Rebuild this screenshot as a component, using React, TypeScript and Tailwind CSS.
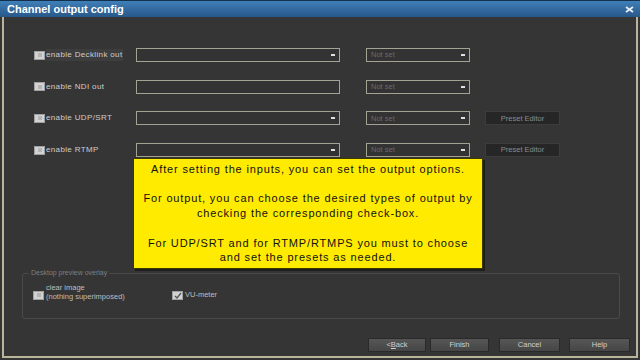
import React from "react";

const Check: React.FC<{ checked?: boolean }> = ({ checked }) => (
  <div className="w-[11px] h-[9px] bg-[#d2d2d2] border border-[#a0a0a0] flex items-center justify-center shrink-0">
    {checked ? (
      <svg width="8" height="7" viewBox="0 0 8 7">
        <path d="M1 4 L3 6 L7 1" stroke="#555" strokeWidth="1.3" fill="none" />
      </svg>
    ) : (
      <div className="w-[4px] h-[4px] bg-[#b4b4b4]" />
    )}
  </div>
);

const Select: React.FC<{ w: string; text?: string; arrow?: boolean }> = ({ w, text, arrow = true }) => (
  <div className={`${w} h-[14px] border border-[#a3a394] bg-[#333333] flex items-center justify-between px-[4px]`}>
    <span className="text-[7.5px] text-[#6a6a6a]">{text}</span>
    {arrow && <div className="w-[4px] h-[2px] bg-[#e0e0e0]" />}
  </div>
);

const PresetBtn: React.FC = () => (
  <div className="ml-[15px] w-[75px] h-[14px] bg-[#262626] border border-[#3c3c3c] flex items-center justify-center text-[7.5px] text-[#8c8c8c]">
    Preset Editor
  </div>
);

const Row: React.FC<{ label: string; focus?: boolean; noArrow?: boolean; preset?: boolean }> = ({ label, focus, noArrow, preset }) => (
  <div className="flex items-center h-[14px]">
    <div className="w-[102px] flex items-center">
      <Check />
      <span className={`ml-[1px] text-[8px] tracking-[0.35px] text-[#cdcdcd] ${focus ? "bg-[#3d3d3d] pr-[1px]" : ""}`}>{label}</span>
    </div>
    <Select w="w-[204px]" arrow={!noArrow} />
    <div className="w-[26px]" />
    <Select w="w-[104px]" text="Not set" />
    {preset && <PresetBtn />}
  </div>
);

const Btn: React.FC<{ w: string; children: React.ReactNode }> = ({ w, children }) => (
  <div className={`${w} h-[14px] bg-gradient-to-b from-[#565656] to-[#464646] border border-[#2a2a2a] flex items-center justify-center text-[7.5px] text-[#cfcfcf]`}>
    {children}
  </div>
);

export default function App() {
  return (
    <div className="w-[640px] h-[360px] bg-[#353535] relative overflow-hidden" style={{ fontFamily: '"Liberation Sans", Arial, sans-serif' }}>
      {/* title bar */}
      <div className="h-[17px] bg-gradient-to-b from-[#3f7fb8] to-[#28588a] border-t border-[#14304d] flex items-center justify-between pl-[7px] pr-[6px]">
        <span className="text-[11px] font-bold text-white">Channel output config</span>
        <svg width="9" height="7" viewBox="0 0 9 7">
          <path d="M1 1 L8 6 M8 1 L1 6" stroke="#e8eef5" strokeWidth="1.8" />
        </svg>
      </div>

      {/* frame */}
      <div className="h-[341px] mx-[2px] border-l-2 border-r-2 border-b-2 border-[#b9b59a] flex flex-col">
        <div className="pl-[30px] pt-[31px] flex flex-col gap-[17.7px]">
          <Row label="enable Decklink out" focus />
          <Row label="enable NDI out" noArrow />
          <Row label="enable UDP/SRT" preset />
          <Row label="enable RTMP" preset />
        </div>

        {/* group */}
        <div className="ml-[18px] mr-[16px] mt-[116px] h-[46px] border border-[#4a4a4a] rounded-[3px] relative">
          <span className="absolute -top-[6px] left-[6px] px-[2px] bg-[#353535] text-[7px] text-[#7f7f7f]">Desktop preview overlay</span>
          <div className="flex items-center pt-[15px] pl-[10px]">
            <Check />
            <div className="ml-[2px] text-[7.5px] leading-[9px] text-[#bdbdbd] -mt-[6px] w-[126px]">
              clear image
              <br />
              (nothing superimposed)
            </div>
            <Check checked />
            <span className="ml-[2px] text-[7.5px] text-[#bdbdbd]">VU-meter</span>
          </div>
        </div>

        {/* bottom buttons */}
        <div className="flex mt-[19px] pl-[364px] items-center">
          <Btn w="w-[58px]">
            &lt; <span className="underline">B</span>ack
          </Btn>
          <div className="w-[4px]" />
          <Btn w="w-[59px]">Finish</Btn>
          <div className="w-[10px]" />
          <Btn w="w-[61px]">Cancel</Btn>
          <div className="w-[9px]" />
          <Btn w="w-[61px]">Help</Btn>
        </div>
      </div>

      {/* yellow hint */}
      <div className="absolute left-[133px] top-[158px] w-[350px] h-[111px] bg-[#ffeb00] border border-[#3a3a00] shadow-[2px_2px_0_#1e1e1e] flex flex-col items-center justify-center text-center text-[11px] leading-[14.8px] tracking-[0.85px] text-[#111]">
        <p>After setting the inputs, you can set the output options.</p>
        <p>&nbsp;</p>
        <p>For output, you can choose the desired types of output by</p>
        <p>checking the corresponding check-box.</p>
        <p>&nbsp;</p>
        <p>For UDP/SRT and for RTMP/RTMPS you must to choose</p>
        <p>and set the presets as needed.</p>
      </div>
    </div>
  );
}
